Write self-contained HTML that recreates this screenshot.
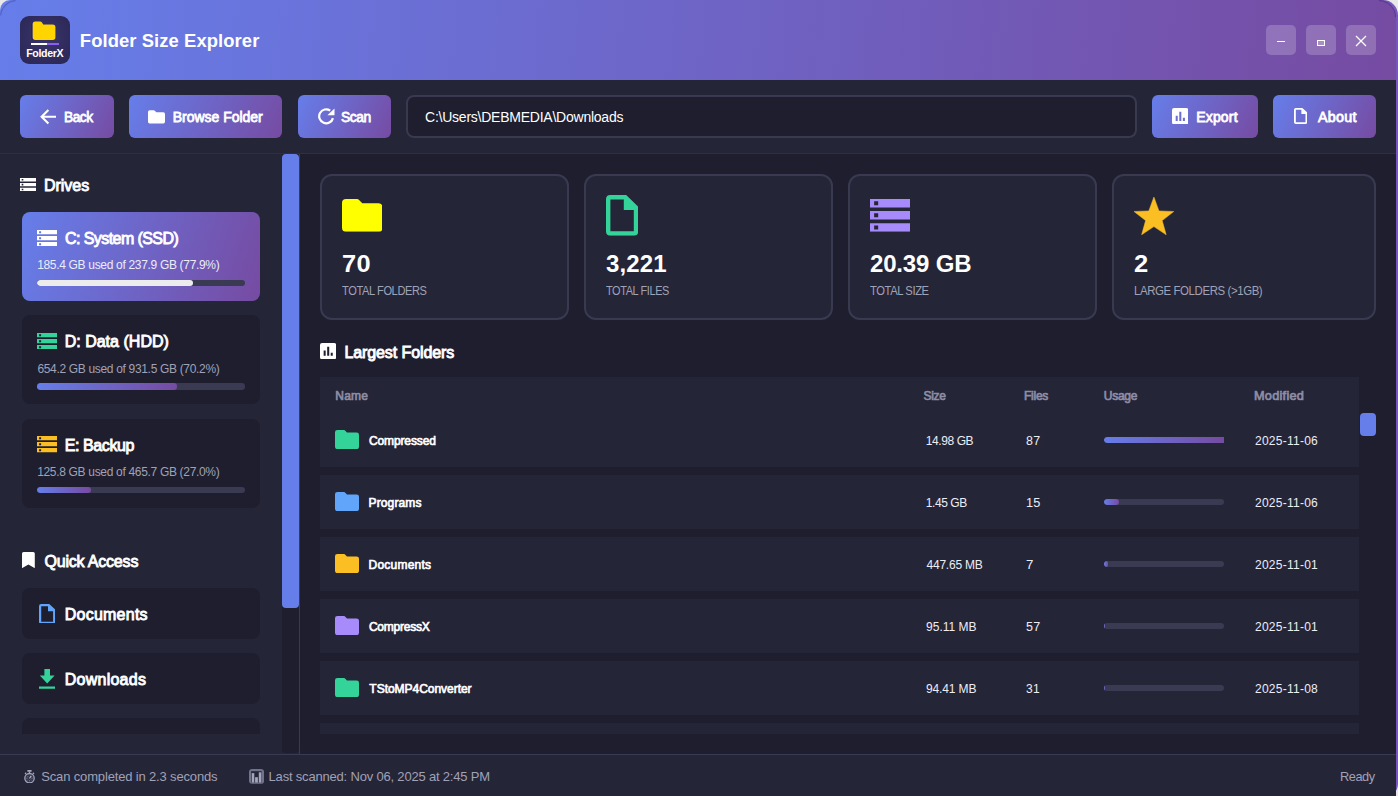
<!DOCTYPE html>
<html lang="en">
<head>
<meta charset="utf-8">
<title>Folder Size Explorer</title>
<style>
*{box-sizing:border-box;margin:0;padding:0}
html,body{width:1398px;height:796px;overflow:hidden;background:#e8e8e8;font-family:"Liberation Sans",sans-serif;color:#fff}
.abs{position:absolute}
.win{position:absolute;left:0;top:0;width:1398px;height:796px}
.strip{position:absolute;left:1300px;top:0;width:98px;height:796px;border-radius:0 15px 12px 0;background:#7757bc}
.inner{position:absolute;left:0;top:0;width:1396px;height:796px;background:#1e1e2e;overflow:hidden;clip-path:inset(80px 0 0 0)}
.hdr{position:absolute;left:0;top:0;width:1396px;height:80px;border-radius:10px 17px 0 0;background:linear-gradient(96deg,#667eea 0%,#764ba2 100%)}
.t{position:absolute;white-space:nowrap;line-height:1;transform-origin:0 50%}
.b{font-weight:bold}
.sm{-webkit-text-stroke:.055em currentColor}
.grad,.card.grad{background:linear-gradient(108deg,#667eea 0%,#764ba2 100%)}
.tb{position:absolute;left:0;top:80px;width:1396px;height:74px;background:#252538;border-bottom:1px solid #2e2e45}
.btn{position:absolute;top:95px;height:42.5px;border-radius:6px;background:linear-gradient(115deg,#667eea 0%,#764ba2 100%)}
.wc{position:absolute;top:25px;width:30px;height:30px;border-radius:5px;background:rgba(255,255,255,.2)}
.side{position:absolute;left:0;top:154px;width:300px;height:601px;background:#252538;border-right:1px solid #3a3a52}
.card{position:absolute;left:22px;width:238.2px;border-radius:8px;background:#1e1e2e}
.bar{position:absolute;left:15px;height:6.4px;border-radius:3.2px;background:#3a3a52;width:208px;overflow:hidden}
.bar i{display:block;height:6.4px;border-radius:3.2px;background:linear-gradient(90deg,#667eea,#764ba2)}
.stat{position:absolute;top:174px;height:146px;border-radius:12px;background:#252538;border:2px solid #393a50}
.row{position:absolute;left:320px;width:1039px;height:54px;background:#252538}
.ub{position:absolute;left:1104px;width:120px;height:6.4px;border-radius:3.2px;background:#3a3a52;overflow:hidden}
.ub i{display:block;height:6.4px;border-radius:3.2px;background:linear-gradient(90deg,#667eea,#764ba2)}
.sb{position:absolute;left:0;top:754px;width:1396px;height:42px;background:#252538;border-top:1px solid #3a3a52}
</style>
</head>
<body>
<div class="win">
<div class="strip"></div>
<div class="inner">
<svg width="0" height="0" style="position:absolute"><defs>
<symbol id="srv" viewBox="0 0 40 32.6" preserveAspectRatio="none"><path fill-rule="evenodd" d="M0 0 H40 V8.5 H0 Z M4.1 2.25 V6.25 H8.1 V2.25 Z M0 12.05 H40 V20.55 H0 Z M4.1 14.3 V18.3 H8.1 V14.3 Z M0 24.1 H40 V32.6 H0 Z M4.1 26.35 V30.35 H8.1 V26.35 Z"/></symbol>
<symbol id="fld" viewBox="0 0 40.2 33" preserveAspectRatio="none"><path d="M0 4 Q0 0 4 0 L15 0 Q15.8 0 16.4 .6 L20.1 4.4 L36.2 4.4 Q40.2 4.4 40.2 8.4 L40.2 29 Q40.2 33 36.2 33 L4 33 Q0 33 0 29 Z"/></symbol>
<symbol id="file" viewBox="0 0 32.2 40.7" preserveAspectRatio="none"><path fill-rule="evenodd" d="M4.4 0 H20.2 L32.2 11.6 V36.3 Q32.2 40.7 27.8 40.7 H4.4 Q0 40.7 0 36.3 V4.4 Q0 0 4.4 0 Z M4.4 4.4 V36.3 H27.8 V15.1 H17.8 V4.4 Z"/></symbol>
<symbol id="chart" viewBox="0 0 16 16"><path fill-rule="evenodd" d="M2 0 H14 Q16 0 16 2 V14 Q16 16 14 16 H2 Q0 16 0 14 V2 Q0 0 2 0 Z M3.6 7.5 V12.6 H5.6 V7.5 Z M7.1 3.6 V12.6 H9.1 V3.6 Z M10.6 9.6 V12.6 H12.6 V9.6 Z"/></symbol>
</defs></svg>
<div class="tb"></div>
<div class="btn" style="left:20px;width:93.5px"><svg class="abs" style="left:19px;top:12.5px" width="18" height="18" viewBox="0 0 18 18"><path d="M17 8.8 L2.8 8.8 M9.4 2 L2.6 8.8 L9.4 15.6" stroke="#fff" stroke-width="2.1" fill="none" stroke-linecap="butt" stroke-linejoin="miter"/></svg><span class="t sm" id="t3" style="left:44.25px;top:15.30px;font-size:14px;letter-spacing:-0.49px;transform:scaleX(0.981)">Back</span></div>
<div class="btn" style="left:128.8px;width:153.7px"><svg class="abs" style="left:19.5px;top:14.5px" width="17" height="14" viewBox="0 0 17 14"><path d="M0 2 Q0 .3 1.7 .3 L5.6 .3 Q6.4 .3 7 .9 L8.3 2.2 L15.3 2.2 Q17 2.2 17 3.9 L17 11.8 Q17 13.5 15.3 13.5 L1.7 13.5 Q0 13.5 0 11.8 Z" fill="#fff"/></svg><span class="t sm" id="t4" style="left:43.99px;top:15.30px;font-size:14px;letter-spacing:-0.031px">Browse Folder</span></div>
<div class="btn" style="left:297.5px;width:93.3px"><svg class="abs" style="left:19px;top:13px" width="19" height="17" viewBox="0 0 19 17"><path d="M15.96 10.11 A7 7 0 1 1 13.2 2.57" stroke="#fff" stroke-width="2.2" fill="none" stroke-linecap="butt"/><path d="M17.5 .6 L17.5 7.2 L10.4 7.2 Z" fill="#fff"/></svg><span class="t sm" id="t5" style="left:43.81px;top:15.30px;font-size:14px;letter-spacing:-0.49px;transform:scaleX(0.9886)">Scan</span></div>
<div class="abs" style="left:406px;top:95px;width:730.5px;height:42.5px;border-radius:8px;background:#1e1e2e;border:2px solid #393a50"></div>
<span class="t" id="t6" style="left:425.07px;top:110.30px;font-size:14px;letter-spacing:-0.24px">C:\Users\DEBMEDIA\Downloads</span>
<div class="btn" style="left:1151.8px;width:106px"><svg class="abs" style="left:20px;top:13px;fill:#fff" width="16.4" height="16.4"><use href="#chart" width="16.4" height="16.4"/></svg><span class="t sm" id="t7" style="left:44.41px;top:15.30px;font-size:14px;letter-spacing:0.175px">Export</span></div>
<div class="btn" style="left:1272.7px;width:103.3px"><svg class="abs" style="left:20.9px;top:13.3px;fill:#fff" width="13.3" height="15.9"><use href="#file" width="13.3" height="15.9"/></svg><span class="t sm" id="t8" style="left:44.89px;top:15.30px;font-size:14px;letter-spacing:0.28px;transform:scaleX(1.0228)">About</span></div>
<div class="side"></div>
<div class="abs" style="left:282px;top:154px;width:17px;height:599px;background:#1e1e2e;border-radius:0 0 4px 4px"></div>
<div class="abs" style="left:282px;top:154px;width:17px;height:454px;background:#667eea;border-radius:4px"></div>
<svg class="abs" style="left:19.8px;top:177.8px;fill:#fff" width="16.4" height="13.2"><use href="#srv" width="16.4" height="13.2"/></svg>
<span class="t sm" id="t9" style="left:43.97px;top:177.71px;font-size:16px;letter-spacing:-0.031px">Drives</span>
<div class="card grad" style="top:212px;height:89px"><svg class="abs" style="left:14.9px;top:17.5px;fill:#fff" width="20.3" height="16.4"><use href="#srv" width="20.3" height="16.4"/></svg><span class="t sm" id="t10" style="left:43.01px;top:18.91px;font-size:16px;letter-spacing:-0.56px;transform:scaleX(0.9982)">C: System (SSD)</span><span class="t" id="t11" style="left:15.14px;top:47.49px;font-size:12px;letter-spacing:-0.319px;color:#ececf6">185.4 GB used of 237.9 GB (77.9%)</span><div class="bar" style="top:68px"><i style="width:156px;background:#ececec"></i></div></div>
<div class="card" style="top:315.4px;height:89px"><svg class="abs" style="left:14.9px;top:17.5px;fill:#34d399" width="20.3" height="16.4"><use href="#srv" width="20.3" height="16.4"/></svg><span class="t sm" id="t12" style="left:42.63px;top:18.91px;font-size:16px;letter-spacing:0.02px">D: Data (HDD)</span><span class="t" id="t13" style="left:15.41px;top:47.49px;font-size:12px;letter-spacing:-0.327px;color:#a0a2b6">654.2 GB used of 931.5 GB (70.2%)</span><div class="bar" style="top:68px"><i style="width:140.3px"></i></div></div>
<div class="card" style="top:418.9px;height:89px"><svg class="abs" style="left:14.9px;top:17.5px;fill:#fbbf24" width="20.3" height="16.4"><use href="#srv" width="20.3" height="16.4"/></svg><span class="t sm" id="t14" style="left:42.63px;top:18.91px;font-size:16px;letter-spacing:-0.382px">E: Backup</span><span class="t" id="t15" style="left:15.14px;top:47.49px;font-size:12px;letter-spacing:-0.319px;color:#a0a2b6">125.8 GB used of 465.7 GB (27.0%)</span><div class="bar" style="top:68px"><i style="width:54.3px"></i></div></div>
<svg class="abs" style="left:21.8px;top:552px" width="12.8" height="16.2" viewBox="0 0 12.8 16.2"><path d="M0 1.6 Q0 0 1.6 0 H11.2 Q12.8 0 12.8 1.6 V16.2 L6.4 12.4 L0 16.2 Z" fill="#fff"/></svg>
<span class="t sm" id="t16" style="left:44.45px;top:553.81px;font-size:16px;letter-spacing:-0.19px">Quick Access</span>
<div class="card" style="top:587.8px;height:51.2px"><svg class="abs" style="left:16.9px;top:15.8px;fill:#60a5fa" width="16.3" height="19.8"><use href="#file" width="16.3" height="19.8"/></svg><span class="t sm" id="t17" style="left:42.76px;top:19.51px;font-size:16px;letter-spacing:0.238px">Documents</span></div>
<div class="card" style="top:653px;height:51.4px"><svg class="abs" style="left:16.9px;top:15.9px" width="16.4" height="19.8" viewBox="0 0 16.4 19.8"><path d="M5.4 0 H11 V6.6 H15.6 L8.2 14.6 L.8 6.6 H5.4 Z M0 17.4 H16.4 V19.8 H0 Z" fill="#34d399"/></svg><span class="t sm" id="t18" style="left:42.76px;top:19.11px;font-size:16px;letter-spacing:0.25px">Downloads</span></div>
<div class="card" style="top:718.4px;height:15.6px;border-radius:8px 8px 0 0"></div>
<div class="stat" style="left:320px;width:249px"></div><svg class="abs" style="left:341.7px;top:199.1px;fill:#ffff00" width="40.6" height="32.8"><use href="#fld" width="40.6" height="32.8"/></svg><span class="t b" id="t19" style="left:342.09px;top:252.23px;font-size:24px;letter-spacing:0.48px;transform:scaleX(1.0567)">70</span><span class="t" id="t20" style="left:342.09px;top:285.29px;font-size:12px;letter-spacing:-0.42px;transform:scaleX(0.9231);color:#a0a2b6">TOTAL FOLDERS</span>
<div class="stat" style="left:584px;width:249px"></div><svg class="abs" style="left:605.9px;top:195.2px;fill:#34d399" width="32.2" height="40.7"><use href="#file" width="32.2" height="40.7"/></svg><span class="t b" id="t21" style="left:606.03px;top:252.23px;font-size:24px;letter-spacing:0.129px">3,221</span><span class="t" id="t22" style="left:606.09px;top:285.29px;font-size:12px;letter-spacing:-0.42px;transform:scaleX(0.9104);color:#a0a2b6">TOTAL FILES</span>
<div class="stat" style="left:848px;width:249px"></div><svg class="abs" style="left:869.9px;top:198.9px;fill:#a78bfa" width="40.4" height="32.7"><use href="#srv" width="40.4" height="32.7"/></svg><span class="t b" id="t23" style="left:869.95px;top:252.23px;font-size:24px;letter-spacing:-0.152px">20.39 GB</span><span class="t" id="t24" style="left:870.09px;top:285.29px;font-size:12px;letter-spacing:-0.42px;transform:scaleX(0.932);color:#a0a2b6">TOTAL SIZE</span>
<div class="stat" style="left:1112px;width:264px"></div><svg class="abs" style="left:1133.9px;top:197px" width="39.8" height="37.8" viewBox="0 0 39.8 37.8"><path stroke="#fbbf24" stroke-width=".5" stroke-linejoin="round" d="M19.9 0.0 L25.0 13.9 L39.8 14.5 L28.2 23.6 L32.2 37.8 L19.9 29.6 L7.6 37.8 L11.6 23.6 L0.0 14.5 L14.8 13.9 Z" fill="#fbbf24"/></svg><span class="t b" id="t25" style="left:1133.65px;top:252.23px;font-size:24px;transform:scaleX(1.0639)">2</span><span class="t" id="t26" style="left:1133.75px;top:285.29px;font-size:12px;letter-spacing:-0.42px;transform:scaleX(0.9526);color:#a0a2b6">LARGE FOLDERS (&gt;1GB)</span>
<svg class="abs" style="left:319.9px;top:343px;fill:#fff" width="16.2" height="16.2"><use href="#chart" width="16.2" height="16.2"/></svg>
<span class="t sm" id="t27" style="left:344.42px;top:344.81px;font-size:16px;letter-spacing:-0.096px">Largest Folders</span>
<div class="row" style="top:377px;height:36px"></div>
<span class="t sm" id="t28" style="left:335.31px;top:389.79px;font-size:12px;letter-spacing:0.179px;color:#8e8ea6">Name</span>
<span class="t sm" id="t29" style="left:923.49px;top:389.79px;font-size:12px;letter-spacing:-0.325px;color:#8e8ea6">Size</span>
<span class="t sm" id="t30" style="left:1024.01px;top:389.79px;font-size:12px;letter-spacing:-0.242px;color:#8e8ea6">Files</span>
<span class="t sm" id="t31" style="left:1103.69px;top:389.79px;font-size:12px;letter-spacing:-0.223px;color:#8e8ea6">Usage</span>
<span class="t sm" id="t32" style="left:1254.02px;top:389.79px;font-size:12px;letter-spacing:0.24px;transform:scaleX(1.0607);color:#8e8ea6">Modified</span>
<div class="row" style="top:413px"></div>
<svg class="abs" style="left:335px;top:429.8px;fill:#34d399" width="24" height="19.1"><use href="#fld" width="24" height="19.1"/></svg>
<span class="t sm" id="t33" style="left:368.90px;top:435.29px;font-size:12px;letter-spacing:-0.113px">Compressed</span>
<span class="t" id="t34" style="left:925.68px;top:435.29px;font-size:12px;letter-spacing:-0.394px;color:#ededf5">14.98 GB</span>
<span class="t" id="t35" style="left:1026.21px;top:435.29px;font-size:12px;letter-spacing:0.24px;transform:scaleX(1.0333);color:#ededf5">87</span>
<div class="ub" style="top:437px;border-radius:3.2px 0 0 3.2px"><i style="width:120px;border-radius:3.2px 0 0 3.2px"></i></div>
<span class="t" id="t36" style="left:1255.46px;top:435.29px;font-size:12px;letter-spacing:0.24px;transform:scaleX(1.0021);color:#ededf5">2025-11-06</span>
<div class="row" style="top:475px"></div>
<svg class="abs" style="left:335px;top:491.8px;fill:#60a5fa" width="24" height="19.1"><use href="#fld" width="24" height="19.1"/></svg>
<span class="t sm" id="t37" style="left:368.57px;top:497.29px;font-size:12px;letter-spacing:0.128px">Programs</span>
<span class="t" id="t38" style="left:925.68px;top:497.29px;font-size:12px;letter-spacing:-0.399px;color:#ededf5">1.45 GB</span>
<span class="t" id="t39" style="left:1025.62px;top:497.29px;font-size:12px;letter-spacing:0.24px;transform:scaleX(1.0594);color:#ededf5">15</span>
<div class="ub" style="top:499px"><i style="width:15px"></i></div>
<span class="t" id="t40" style="left:1255.46px;top:497.29px;font-size:12px;letter-spacing:0.24px;transform:scaleX(1.0021);color:#ededf5">2025-11-06</span>
<div class="row" style="top:537px"></div>
<svg class="abs" style="left:335px;top:553.8px;fill:#fbbf24" width="24" height="19.1"><use href="#fld" width="24" height="19.1"/></svg>
<span class="t sm" id="t41" style="left:368.57px;top:559.29px;font-size:12px;letter-spacing:0.229px">Documents</span>
<span class="t" id="t42" style="left:926.49px;top:559.29px;font-size:12px;letter-spacing:-0.223px;color:#ededf5">447.65 MB</span>
<span class="t" id="t43" style="left:1026.04px;top:559.29px;font-size:12px;transform:scaleX(1.1019);color:#ededf5">7</span>
<div class="ub" style="top:561px"><i style="width:3.6px"></i></div>
<span class="t" id="t44" style="left:1255.46px;top:559.29px;font-size:12px;letter-spacing:0.24px;transform:scaleX(1.0014);color:#ededf5">2025-11-01</span>
<div class="row" style="top:599px"></div>
<svg class="abs" style="left:335px;top:615.8px;fill:#a78bfa" width="24" height="19.1"><use href="#fld" width="24" height="19.1"/></svg>
<span class="t sm" id="t45" style="left:368.90px;top:621.29px;font-size:12px;letter-spacing:-0.216px">CompressX</span>
<span class="t" id="t46" style="left:926.05px;top:621.29px;font-size:12px;letter-spacing:0.008px;color:#ededf5">95.11 MB</span>
<span class="t" id="t47" style="left:1025.91px;top:621.29px;font-size:12px;letter-spacing:0.24px;transform:scaleX(1.044);color:#ededf5">57</span>
<div class="ub" style="top:623px"><i style="width:1.3px"></i></div>
<span class="t" id="t48" style="left:1255.46px;top:621.29px;font-size:12px;letter-spacing:0.24px;transform:scaleX(1.0014);color:#ededf5">2025-11-01</span>
<div class="row" style="top:661px"></div>
<svg class="abs" style="left:335px;top:677.8px;fill:#34d399" width="24" height="19.1"><use href="#fld" width="24" height="19.1"/></svg>
<span class="t sm" id="t49" style="left:369.36px;top:683.29px;font-size:12px;letter-spacing:-0.033px">TStoMP4Converter</span>
<span class="t" id="t50" style="left:926.05px;top:683.29px;font-size:12px;letter-spacing:-0.135px;color:#ededf5">94.41 MB</span>
<span class="t" id="t51" style="left:1026.03px;top:683.29px;font-size:12px;letter-spacing:0.24px;transform:scaleX(1.001);color:#ededf5">31</span>
<div class="ub" style="top:685px"><i style="width:1.2px"></i></div>
<span class="t" id="t52" style="left:1255.46px;top:683.29px;font-size:12px;letter-spacing:0.24px;transform:scaleX(1.0015);color:#ededf5">2025-11-08</span>
<div class="row" style="top:723.2px;height:10.8px"></div>
<div class="abs" style="left:1359.5px;top:413px;width:16.5px;height:22.5px;border-radius:4px;background:#667eea"></div>
<div class="sb"></div>
<svg class="abs" style="left:23.5px;top:769.8px" width="11" height="13.6" viewBox="0 0 11 13.6"><rect x="3.3" y="0" width="4.4" height="1.7" rx=".4" fill="#a3a6bb"/><rect x="4.8" y="1.5" width="1.4" height="1.6" fill="#a3a6bb"/><path d="M1 3.9 L2.2 2.8 M10 3.9 L8.8 2.8" stroke="#a3a6bb" stroke-width="1.3" fill="none"/><circle cx="5.5" cy="8.2" r="4.7" stroke="#a3a6bb" stroke-width="1.3" fill="#33354b"/><path d="M5.5 8.3 L7.3 5.9" stroke="#b4b7ca" stroke-width="1.2" fill="none"/><path d="M2.4 8.2 H3.6 M7.4 8.2 H8.6 M5.5 10.3 V11.4 M3.3 6 L4 6.7 M3.3 10.4 L4 9.7 M7.7 10.4 L7 9.7" stroke="#8e91a8" stroke-width=".8" fill="none"/></svg>
<span class="t" id="t53" style="left:41.28px;top:770.25px;font-size:13px;letter-spacing:-0.156px;color:#a0a2b6">Scan completed in 2.3 seconds</span>
<svg class="abs" style="left:249px;top:768.8px" width="15.2" height="14.8" viewBox="0 0 15.2 14.8"><rect x="0" y="0" width="15.2" height="14.8" rx="3.2" fill="#70738a"/><rect x="2.1" y="2.2" width="10.6" height="11.3" fill="#252538"/><rect x="2.7" y="4.1" width="2.6" height="9.5" fill="#a3a6bb"/><rect x="6.1" y="8.2" width="2.8" height="5.4" fill="#a3a6bb"/><rect x="9.8" y="3.3" width="2.6" height="10.3" fill="#a3a6bb"/></svg>
<span class="t" id="t54" style="left:268.56px;top:770.25px;font-size:13px;letter-spacing:-0.19px;color:#a0a2b6">Last scanned: Nov 06, 2025 at 2:45 PM</span>
<span class="t" id="t55" style="left:1340.46px;top:770.25px;font-size:13px;letter-spacing:-0.455px;transform:scaleX(0.9831);color:#a0a2b6">Ready</span>
</div>
<div class="hdr">
<div class="abs" style="left:20px;top:16px;width:50px;height:48px;border-radius:9px;background:radial-gradient(circle at 50% 45%,#3b366b 0%,#2e2a5a 70%,#2b2755 100%)">
<svg class="abs" style="left:10.2px;top:4.4px" width="28" height="22" viewBox="0 0 28 22"><path d="M1.5 4.5 Q1.5 2 4 2 L9.5 2 Q10.8 2 11.5 3 L12.6 4.6 L22.5 4.6 Q25 4.6 25 7 L25 17.5 Q25 20 22.5 20 L4 20 Q1.5 20 1.5 17.5 Z" fill="#14148c"/><path d="M2.6 4.2 Q2.6 1.6 5.2 1.6 L10 1.6 Q11.3 1.6 12 2.6 L13.2 4.4 L22.8 4.4 Q25.4 4.4 25.4 7 L25.4 17.3 Q25.4 19.9 22.8 19.9 L5.2 19.9 Q2.6 19.9 2.6 17.3 Z" fill="#ffd400"/></svg>
<div class="abs" style="left:11px;top:27px;width:28px;height:2.2px;background:linear-gradient(90deg,#fff 0,#fff 57%,#8b5cf6 57%)"></div>
<span class="t b" id="t1" style="left:6.22px;top:32.28px;font-size:10.6px;letter-spacing:-0.358px">FolderX</span>
</div>
<span class="t b" id="t2" style="left:79.85px;top:31.97px;font-size:18.4px;letter-spacing:0.088px">Folder Size Explorer</span>
<div class="wc" style="left:1266px"><div class="abs" style="left:11px;top:15.8px;width:8px;height:1.2px;background:#fff"></div></div>
<div class="wc" style="left:1306px"><div class="abs" style="left:11px;top:15px;width:8px;height:6.4px;border:1.2px solid #fff;background:rgba(255,255,255,.22)"></div></div>
<div class="wc" style="left:1346px"><svg class="abs" style="left:9px;top:10px" width="12" height="12" viewBox="0 0 12 12"><path d="M1 1 L11 11 M11 1 L1 11" stroke="#fff" stroke-width="1.3" fill="none"/></svg></div>
<svg class="abs" style="left:0;top:0" width="20" height="20" viewBox="0 0 20 20"><path d="M.7 15.5 A16 16 0 0 1 15.5 .6" stroke="rgba(48,58,150,.42)" stroke-width="1.1" fill="none"/></svg>
<svg class="abs" style="left:1376px;top:0" width="20" height="20" viewBox="0 0 20 20"><path d="M3 .6 A16.5 16.5 0 0 1 19.5 17" stroke="rgba(60,40,120,.45)" stroke-width="1.1" fill="none"/></svg>
</div>
</div>
</body>
</html>
